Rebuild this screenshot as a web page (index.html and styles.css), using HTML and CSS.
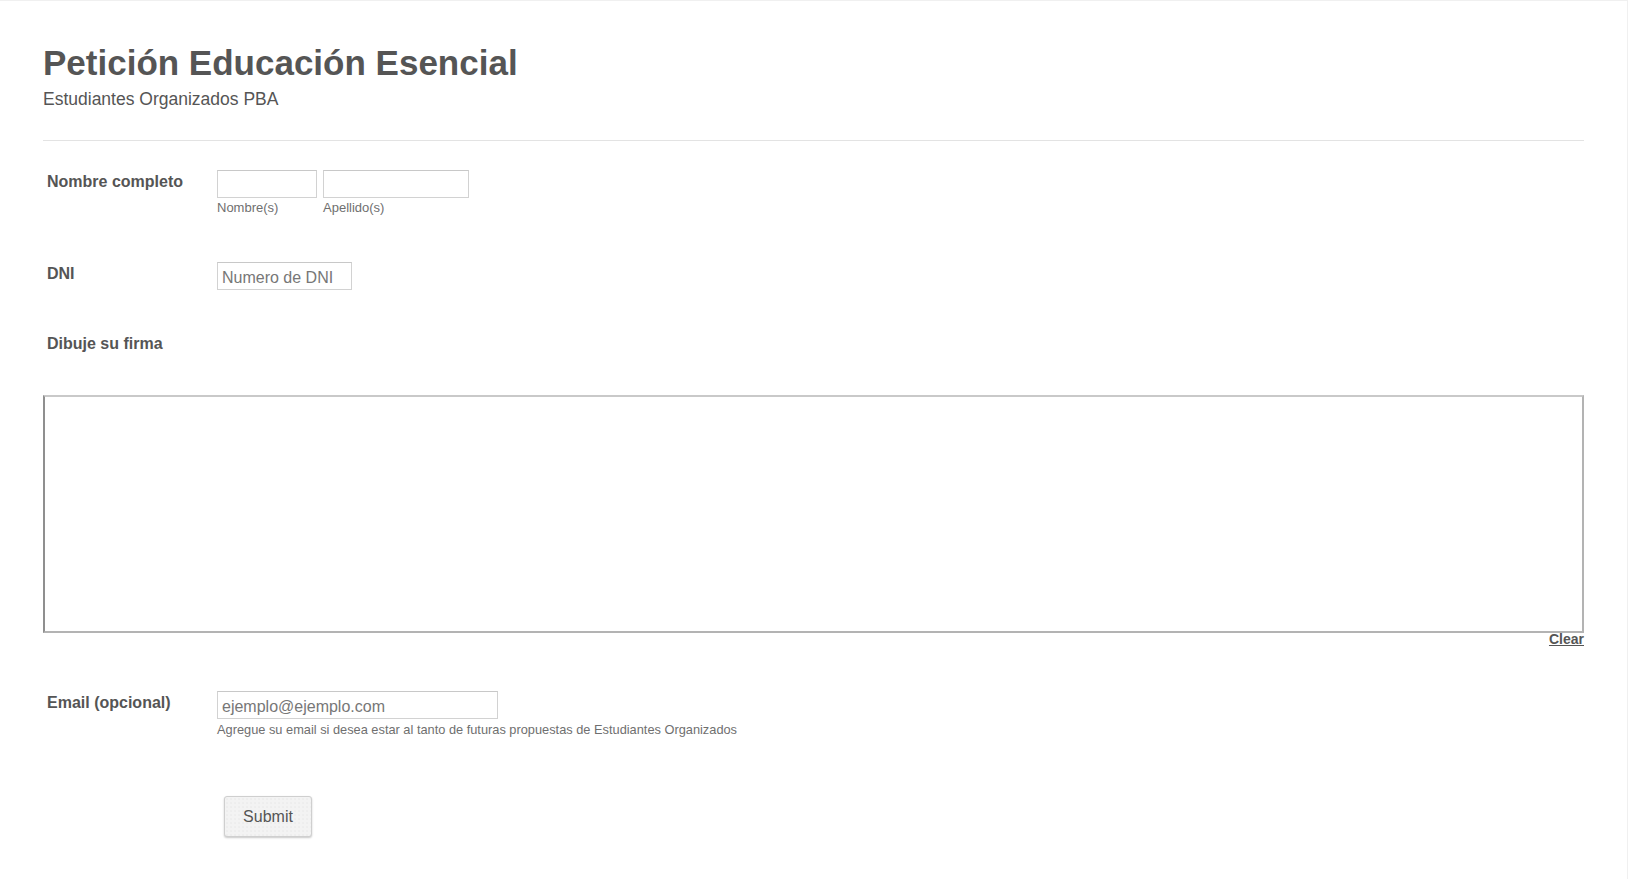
FILE: index.html
```html
<!DOCTYPE html>
<html lang="es">
<head>
<meta charset="utf-8">
<title>Petición Educación Esencial</title>
<link rel="stylesheet" href="styles.css">
</head>
<body>
<div class="page">
  <header class="header">
    <h1 class="title">Petición Educación Esencial</h1>
    <div class="subtitle">Estudiantes Organizados PBA</div>
  </header>
  <form class="form">
    <div class="row row-name">
      <label class="label">Nombre completo</label>
      <div class="field">
        <div class="name-group">
          <div class="sub">
            <input class="input input-first" type="text">
            <span class="sublabel">Nombre(s)</span>
          </div>
          <div class="sub">
            <input class="input input-last" type="text">
            <span class="sublabel">Apellido(s)</span>
          </div>
        </div>
      </div>
    </div>
    <div class="row row-dni">
      <label class="label">DNI</label>
      <div class="field">
        <input class="input input-dni" type="text" placeholder="Numero de DNI">
      </div>
    </div>
    <div class="row-sign">
      <label class="label">Dibuje su firma</label>
      <div class="sign-box"></div>
      <div class="clear-line"><a class="clear" href="#">Clear</a></div>
    </div>
    <div class="row row-email">
      <label class="label">Email (opcional)</label>
      <div class="field">
        <input class="input input-email" type="text" placeholder="ejemplo@ejemplo.com">
        <span class="sublabel help">Agregue su email si desea estar al tanto de futuras propuestas de Estudiantes Organizados</span>
      </div>
    </div>
    <div class="row row-submit">
      <div class="label-spacer"></div>
      <div class="field">
        <button class="submit" type="button">Submit</button>
      </div>
    </div>
  </form>
</div>
</body>
</html>
```

FILE: styles.css
```css
html, body {
  margin: 0;
  padding: 0;
  background: #fff;
}

body {
  font-family: "Liberation Sans", Arial, sans-serif;
  color: #555;
}

.page {
  height: 879px;
  border-top: 1px solid #f0f0f0;
  border-right: 1px solid #f0f0f0;
  padding: 0 43px 0 43px;
  box-sizing: border-box;
}

.header {
  padding-top: 42px;
  padding-bottom: 31px;
  border-bottom: 1px solid #e3e3e3;
}

.title {
  margin: 0;
  font-size: 35px;
  line-height: 40px;
  font-weight: bold;
  color: #555;
}

.subtitle {
  margin-top: 6px;
  font-size: 17.5px;
  line-height: 20px;
  color: #555;
}

.form {
  display: flex;
  flex-direction: column;
}

.row {
  display: flex;
  align-items: flex-start;
}

.row-name { margin-top: 29px; }
.row-dni { margin-top: 47px; }
.row-sign { margin-top: 42px; }
.row-email { margin-top: 46px; }
.row-submit { margin-top: 59px; }

.label {
  display: block;
  width: 174px;
  flex: none;
  box-sizing: border-box;
  padding: 2px 0 0 4px;
  font-size: 16px;
  line-height: 20px;
  font-weight: bold;
  color: #555;
}

.label-spacer {
  width: 174px;
  flex: none;
}

.field {
  display: flex;
  flex-direction: column;
  align-items: flex-start;
}

.name-group {
  display: flex;
  gap: 6px;
}

.sub {
  display: flex;
  flex-direction: column;
}

.input {
  box-sizing: border-box;
  height: 28px;
  margin: 0;
  padding: 4px 4px 0 4px;
  border: 1px solid #d2d2d2;
  border-top-color: #c8c8c8;
  border-radius: 0;
  background: #fff;
  font-family: "Liberation Sans", Arial, sans-serif;
  font-size: 16px;
  color: #555;
  outline: none;
}

.input::placeholder {
  color: #777;
}

.input-first { width: 100px; }
.input-last { width: 146px; }
.input-dni { width: 135px; }
.input-email { width: 281px; }

.sublabel {
  margin-top: 2px;
  font-size: 13px;
  line-height: 15px;
  color: #6f6f6f;
}

.help {
  margin-top: 3px;
  font-size: 12.8px;
}

.sign-box {
  margin-top: 41px;
  height: 238px;
  box-sizing: border-box;
  border-top: 2px solid #c9c9c9;
  border-left: 2px solid #8f8f8f;
  border-right: 2px solid #b3b3b3;
  border-bottom: 2px solid #b3b3b3;
  background: #fff;
}

.clear-line {
  display: flex;
  justify-content: flex-end;
  height: 12px;
  line-height: 12px;
}

.clear {
  font-size: 14px;
  line-height: 12px;
  font-weight: bold;
  color: #555;
  text-decoration: underline;
}

.submit {
  margin-left: 7px;
  width: 88px;
  height: 41px;
  box-sizing: border-box;
  border: 1px solid #cfcfcf;
  border-radius: 3px;
  background-color: #f3f3f3;
  background-image: radial-gradient(#e6e6e6 0.6px, transparent 0.8px);
  background-size: 4px 4px;
  box-shadow: 0 1px 2px rgba(0, 0, 0, 0.22);
  font-family: "Liberation Sans", Arial, sans-serif;
  font-size: 16px;
  color: #555;
  padding: 0;
  cursor: pointer;
}
```
